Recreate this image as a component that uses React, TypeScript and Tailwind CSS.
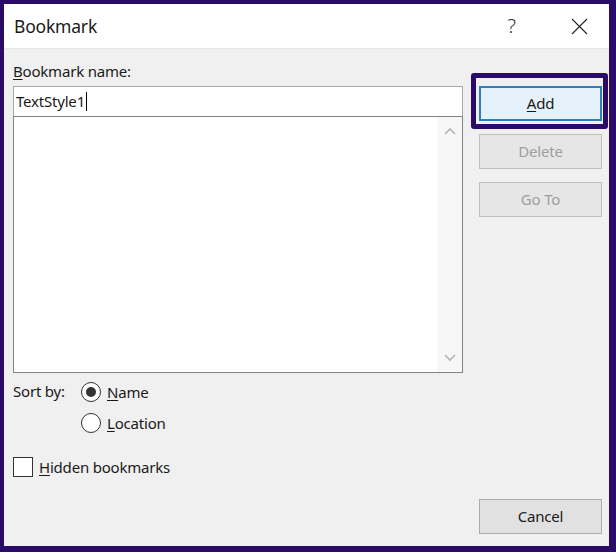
export default function App() {
  const font = { fontFamily: '"Segoe UI", "Noto Sans", "Open Sans", sans-serif' };
  return (
    <div className="w-[616px] h-[552px] bg-[#2a0b68] pt-[4px] pl-[4px] pr-[7px] pb-[6px]" style={font}>
      <div className="flex flex-col w-full h-full bg-[#f0f0f0] text-[#1a1a1a]">
        {/* Title bar */}
        <div className="h-[45px] bg-white flex items-center pl-[10px] border-b border-[#e6e6e6] shrink-0">
          <span className="text-[17.5px] tracking-[-0.2px] mt-[1px]">Bookmark</span>
          <span className="ml-auto mr-[55px] text-[20px] text-[#333] font-light">?</span>
          <svg className="mr-[21px]" width="17" height="17" viewBox="0 0 17 17" fill="none" stroke="#222" strokeWidth="1.1">
            <path d="M1 1L16 16M16 1L1 16" />
          </svg>
        </div>

        {/* Body */}
        <div className="flex-1 flex pl-[9px] pr-[5px] pt-[12px] pb-[12px]">
          <div className="w-[450px] flex flex-col text-[15px] tracking-[-0.2px]">
            <div className="h-[21px] leading-[21px]">
              <span className="underline underline-offset-2">B</span>ookmark name:
            </div>
            <div className="mt-[4px] h-[31px] bg-white border border-[#a9a9a9] flex items-center pl-[2px]">
              TextStyle1
              <span className="inline-block w-[1px] h-[19px] bg-black ml-[1px]" />
            </div>
            <div className="h-[257px] -mt-[1px] bg-white border border-[#828282] flex justify-end">
              <div className="w-[25px] bg-[#f7f7f7] flex flex-col items-center justify-between py-[10px]">
                <svg width="12" height="8" viewBox="0 0 12 8" fill="none" stroke="#b5b5b5" strokeWidth="1.6">
                  <path d="M1 7L6 2L11 7" />
                </svg>
                <svg width="12" height="8" viewBox="0 0 12 8" fill="none" stroke="#b5b5b5" strokeWidth="1.6">
                  <path d="M1 1L6 6L11 1" />
                </svg>
              </div>
            </div>

            <div className="mt-[9px] flex">
              <div className="w-[68px] h-[20px] leading-[18px]">Sort by:</div>
              <div className="flex flex-col gap-[11px]">
                <label className="flex items-center gap-[6px] h-[20px]">
                  <span className="w-[20px] h-[20px] rounded-full border border-[#333] bg-white flex items-center justify-center">
                    <span className="w-[10px] h-[10px] rounded-full bg-[#333]" />
                  </span>
                  <span>
                    <span className="underline underline-offset-2">N</span>ame
                  </span>
                </label>
                <label className="flex items-center gap-[6px] h-[20px]">
                  <span className="w-[20px] h-[20px] rounded-full border border-[#333] bg-white" />
                  <span>
                    <span className="underline underline-offset-2">L</span>ocation
                  </span>
                </label>
              </div>
            </div>

            <label className="mt-[24px] flex items-center gap-[6px] h-[20px]">
              <span className="w-[20px] h-[20px] border border-[#333] bg-white" />
              <span>
                <span className="underline underline-offset-2">H</span>idden bookmarks
              </span>
            </label>
          </div>

          <div className="ml-[16px] w-[123px] flex flex-col text-[15px] tracking-[-0.2px]">
            <div className="relative mt-[25px]">
              <div className="absolute -left-[8px] -top-[13px] -right-[6px] -bottom-[8px] border-[5px] border-[#2a0b68] rounded-[3px]" />
              <button className="w-full h-[35px] bg-[#e5f1fb] border-2 border-[#2d7fc1]">
                <span className="underline underline-offset-2">A</span>dd
              </button>
            </div>
            <button className="mt-[13px] h-[35px] bg-[#e6e6e6] border border-[#bfbfbf] text-[#9e9e9e]">Delete</button>
            <button className="mt-[13px] h-[35px] bg-[#e6e6e6] border border-[#bfbfbf] text-[#9e9e9e]">Go To</button>
            <button className="mt-auto h-[35px] bg-[#e1e1e1] border border-[#adadad]">Cancel</button>
          </div>
        </div>
      </div>
    </div>
  );
}
